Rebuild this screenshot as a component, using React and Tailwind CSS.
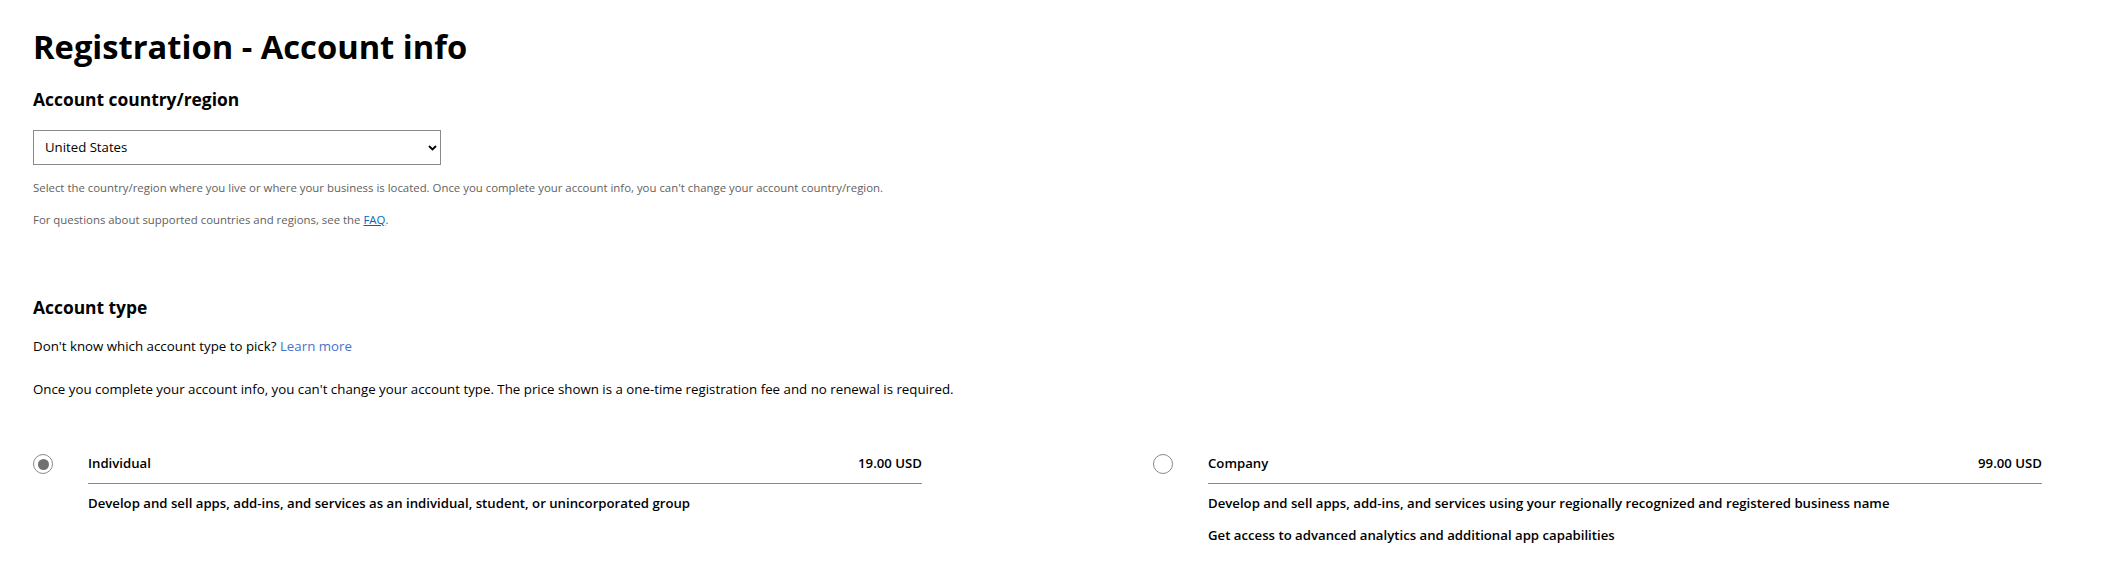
import React, { useState } from "react";

const FONT = { fontFamily: "'Open Sans', 'Noto Sans', sans-serif" };

function Radio({ checked }) {
  return (
    <span className="mt-px flex h-5 w-5 shrink-0 items-center justify-center rounded-full border border-[#8a8a8a] bg-white">
      {checked && <span className="h-[11px] w-[11px] rounded-full bg-[#707070]"></span>}
    </span>
  );
}

function AccountOption({ name, price, lines, checked, onPick }) {
  return (
    <div className="flex w-[889px] cursor-pointer gap-[35px]" onClick={onPick}>
      <Radio checked={checked} />
      <div className="flex-1 text-[13.2px] font-semibold text-black">
        <div className="flex h-[31px] items-start justify-between border-b border-[#8a8a8a]">
          <span className="leading-[20px]">{name}</span>
          <span className="leading-[20px]">{price}</span>
        </div>
        {lines.map((line, i) => (
          <p key={line} className={`leading-[20px] ${i === 0 ? "mt-[9px]" : "mt-[12px]"}`}>
            {line}
          </p>
        ))}
      </div>
    </div>
  );
}

export default function App() {
  const [type, setType] = useState("individual");

  return (
    <div className="min-h-screen bg-white pl-[33px] pt-[27px] text-black" style={FONT}>
      <h1 className="text-[32.7px] font-bold leading-[40px]">Registration - Account info</h1>

      {/* Country */}
      <h2 className="mt-[20px] text-[17.4px] font-bold leading-[24px]">Account country/region</h2>

      <div className="relative mt-[19px] w-[408px]">
        <select
          defaultValue="US"
          className="h-[35px] w-full appearance-none border border-[#8a8a8a] bg-white pl-[11px] text-[13.2px] text-black outline-none"
        >
          <option value="US">United States</option>
          <option value="CA">Canada</option>
          <option value="GB">United Kingdom</option>
        </select>
        <svg
          className="pointer-events-none absolute right-[4px] top-[15px]"
          width="9"
          height="6"
          viewBox="0 0 9 6"
          fill="none"
        >
          <path d="M1 1l3.5 3.5L8 1" stroke="#000" strokeWidth="1.8" />
        </svg>
      </div>

      <p className="mt-[15px] text-[11.4px] leading-[16px] text-[#616161]">
        Select the country/region where you live or where your business is located. Once you complete your account info, you can't change your account country/region.
      </p>
      <p className="mt-[16px] text-[11.4px] leading-[16px] text-[#616161]">
        For questions about supported countries and regions, see the{" "}
        <a href="#" className="text-[#0067b8] underline">FAQ</a>.
      </p>

      {/* Account type */}
      <h2 className="mt-[67px] text-[17.4px] font-bold leading-[24px]">Account type</h2>
      <p className="mt-[17px] text-[13.3px] leading-[20px]">
        Don't know which account type to pick? <a href="#" className="text-[#4a72c8]">Learn more</a>
      </p>
      <p className="mt-[23px] text-[13.3px] leading-[20px]">
        Once you complete your account info, you can't change your account type. The price shown is a one-time registration fee and no renewal is required.
      </p>

      <div className="mt-[54px] flex gap-[231px]">
        <AccountOption
          name="Individual"
          price="19.00 USD"
          checked={type === "individual"}
          onPick={() => setType("individual")}
          lines={["Develop and sell apps, add-ins, and services as an individual, student, or unincorporated group"]}
        />
        <AccountOption
          name="Company"
          price="99.00 USD"
          checked={type === "company"}
          onPick={() => setType("company")}
          lines={[
            "Develop and sell apps, add-ins, and services using your regionally recognized and registered business name",
            "Get access to advanced analytics and additional app capabilities",
          ]}
        />
      </div>
    </div>
  );
}
